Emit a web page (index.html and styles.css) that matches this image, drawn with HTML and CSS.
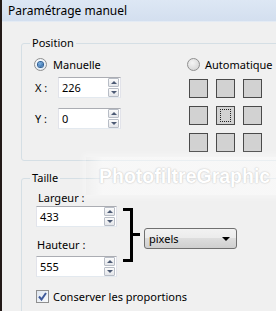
FILE: index.html
```html
<!DOCTYPE html>
<html>
<head>
<meta charset="utf-8">
<link rel="stylesheet" href="styles.css">
</head>
<body>
<div class="win">
  <div class="titlebar">Paramétrage manuel</div>
  <div class="content">
    <fieldset class="group pos">
      <legend>Position</legend>
      <div class="pos-cols">
        <div class="col-left">
          <div class="radio"><span class="rb on"></span><span>Manuelle</span></div>
          <div class="field-row first">
            <span class="lbl">X :</span>
            <div class="spin xy"><span class="val">226</span><span class="spinbtns"><span class="sb up"></span><span class="sb down"></span></span></div>
          </div>
          <div class="field-row second">
            <span class="lbl">Y :</span>
            <div class="spin xy"><span class="val">0</span><span class="spinbtns"><span class="sb up"></span><span class="sb down"></span></span></div>
          </div>
        </div>
        <div class="col-right">
          <div class="radio"><span class="rb"></span><span>Automatique</span></div>
          <div class="grid9">
            <span class="cell"></span><span class="cell"></span><span class="cell"></span>
            <span class="cell"></span><span class="cell focus"><span class="dots"></span></span><span class="cell"></span>
            <span class="cell"></span><span class="cell"></span><span class="cell"></span>
          </div>
        </div>
      </div>
    </fieldset>

    <fieldset class="group size">
      <legend>Taille</legend>
      <div class="size-row">
        <div class="size-left">
          <div class="flabel l1">Largeur :</div>
          <div class="spin wh"><span class="val">433</span><span class="spinbtns"><span class="sb up"></span><span class="sb down"></span></span></div>
          <div class="flabel l2">Hauteur :</div>
          <div class="spin wh"><span class="val">555</span><span class="spinbtns"><span class="sb up"></span><span class="sb down"></span></span></div>
        </div>
        <svg class="bracket" width="18" height="54" viewBox="0 0 18 54">
          <path d="M0 1.5 H8.5 V52.5 H0 M8.5 26.5 H17" fill="none" stroke="#000" stroke-width="3"/>
        </svg>
        <div class="select"><span>pixels</span><span class="caret"></span></div>
      </div>
      <div class="check-row"><span class="cb"><svg width="9" height="9" viewBox="0 0 9 9"><path d="M1 4.5 L3.5 7.5 L8 1" fill="none" stroke="#3f5a9a" stroke-width="2"/></svg></span><span>Conserver les proportions</span></div>
    </fieldset>
  </div>
  <div class="watermark"><span>PhotofiltreGraphic</span></div>
</div>
</body>
</html>
```

FILE: styles.css
```css
html, body {
  margin: 0;
  padding: 0;
  background: #f0f0f0;
}
.win {
  position: relative;
  width: 274px;
  height: 311px;
  overflow: hidden;
  border-left: 2px solid #231a18;
  background: #f0f0f0;
  font-family: "Noto Sans", "Open Sans", sans-serif;
  font-size: 11px;
  color: #000;
}
.titlebar {
  height: 21px;
  line-height: 22px;
  padding-left: 6px;
  font-size: 12px;
  background: linear-gradient(#dde7f4, #d3dfef);
  border-bottom: 1px solid #e4ebf4;
}
.content {
  padding-top: 13px;
}
.group {
  margin: 0 -30px 0 19px;
  padding: 0 0 0 8px;
  border: 1px solid #d5dfe5;
  border-radius: 3px;
  min-width: 0;
}
.group legend {
  padding: 0 2px;
  line-height: 16px;
  font-size: 11px;
}
.pos-cols {
  display: flex;
  padding-left: 4px;
  padding-bottom: 8px;
}
.col-left {
  width: 153px;
}
.radio {
  display: flex;
  align-items: center;
  height: 16px;
  margin-top: 5px;
  gap: 6px;
}
.col-right .radio {
  gap: 5px;
}
.rb {
  box-sizing: border-box;
  width: 13px;
  height: 13px;
  border-radius: 50%;
  border: 1px solid #8f8f8f;
  background: radial-gradient(circle at 40% 35%, #f4f4f4, #cfcfcf);
  display: inline-flex;
  align-items: center;
  justify-content: center;
}
.rb.on {
  background: radial-gradient(circle at 40% 35%, #ffffff, #d8e4f0);
}
.rb.on::before {
  content: "";
  width: 5px;
  height: 5px;
  border-radius: 50%;
  background: radial-gradient(circle at 40% 35%, #7fb6e8, #1d5494);
  box-shadow: 0 0 0 1px #2c5f97;
}
.field-row {
  display: flex;
  align-items: center;
}
.field-row.first {
  margin-top: 5px;
}
.field-row.second {
  margin-top: 10px;
}
.lbl {
  width: 23px;
  padding-left: 1px;
}
.spin {
  box-sizing: border-box;
  display: flex;
  align-items: center;
  justify-content: space-between;
  height: 21px;
  background: #fff;
  border: 1px solid #e2e3ea;
  border-top-color: #abadb3;
  border-bottom-color: #e3e9ef;
  padding-left: 3px;
  padding-right: 1px;
}
.spin.xy {
  width: 63px;
}
.spin.wh {
  width: 81px;
}
.val {
  line-height: 18px;
}
.spinbtns {
  display: flex;
  flex-direction: column;
  gap: 1px;
}
.sb {
  box-sizing: border-box;
  width: 11px;
  height: 9px;
  border: 1px solid #b8bdc6;
  border-radius: 1px;
  background: linear-gradient(#fbfbfb, #e4e6ea);
  display: flex;
  align-items: center;
  justify-content: center;
}
.sb::before {
  content: "";
  width: 0;
  height: 0;
  border-left: 3px solid transparent;
  border-right: 3px solid transparent;
}
.sb.up::before {
  border-bottom: 3px solid #4c5a74;
}
.sb.down::before {
  border-top: 3px solid #4c5a74;
}
.grid9 {
  display: grid;
  grid-template-columns: repeat(3, 19px);
  grid-auto-rows: 19px;
  gap: 8px;
  margin-top: 7px;
  margin-left: 2px;
}
.cell {
  box-sizing: border-box;
  border: 1px solid #4a4a4a;
  background: #d2d2d2;
  display: flex;
  align-items: center;
  justify-content: center;
}
.dots {
  box-sizing: border-box;
  width: 11px;
  height: 13px;
  border: 1px dotted #222;
}
.group.size {
  margin-top: 9px;
  padding-left: 14px;
}
.group.size legend {
  margin-left: -6px;
}
.size-row {
  display: flex;
  align-items: flex-start;
}
.size-left {
  width: 81px;
}
.flabel {
  line-height: 14px;
  padding-left: 2px;
}
.flabel.l1 {
  margin-top: 5px;
  margin-bottom: 1px;
}
.flabel.l2 {
  padding-left: 1px;
  margin-top: 11px;
  margin-bottom: 4px;
}
.bracket {
  display: block;
  margin-top: 22px;
  margin-left: 6px;
}
.select {
  box-sizing: border-box;
  width: 93px;
  height: 21px;
  margin-left: 3px;
  margin-top: 42px;
  border: 1px solid #707070;
  border-radius: 3px;
  background: linear-gradient(#f2f2f2 0%, #ebebeb 50%, #dddddd 50%, #cfcfcf 100%);
  display: flex;
  align-items: center;
  justify-content: space-between;
  padding: 0 6px 0 4px;
}
.caret {
  width: 0;
  height: 0;
  border-left: 4px solid transparent;
  border-right: 4px solid transparent;
  border-top: 4px solid #000;
}
.check-row {
  display: flex;
  align-items: center;
  gap: 4px;
  margin-top: 12px;
  height: 14px;
  padding-bottom: 20px;
}
.cb {
  box-sizing: border-box;
  width: 13px;
  height: 13px;
  border: 1px solid #8f8f8f;
  background: linear-gradient(135deg, #dfe6ef, #f8fafc);
  display: flex;
  align-items: center;
  justify-content: center;
}
.watermark {
  position: absolute;
  left: 84px;
  top: 157px;
  width: 200px;
  height: 38px;
  background: linear-gradient(90deg, rgba(255,255,255,0) 0%, rgba(255,255,255,0.5) 8%, rgba(255,255,255,0.5) 100%);
  box-shadow: 0 0 6px 3px rgba(255,255,255,0.35);
  display: flex;
  align-items: center;
  padding-left: 13px;
  box-sizing: border-box;
}
.watermark span {
  font-family: "Liberation Sans", Arial, sans-serif;
  font-weight: bold;
  font-size: 19.5px;
  color: #ffffff;
  text-shadow: 0 0 1px #c4c4c4, 0 0 2px #d0d0d0;
}
```
